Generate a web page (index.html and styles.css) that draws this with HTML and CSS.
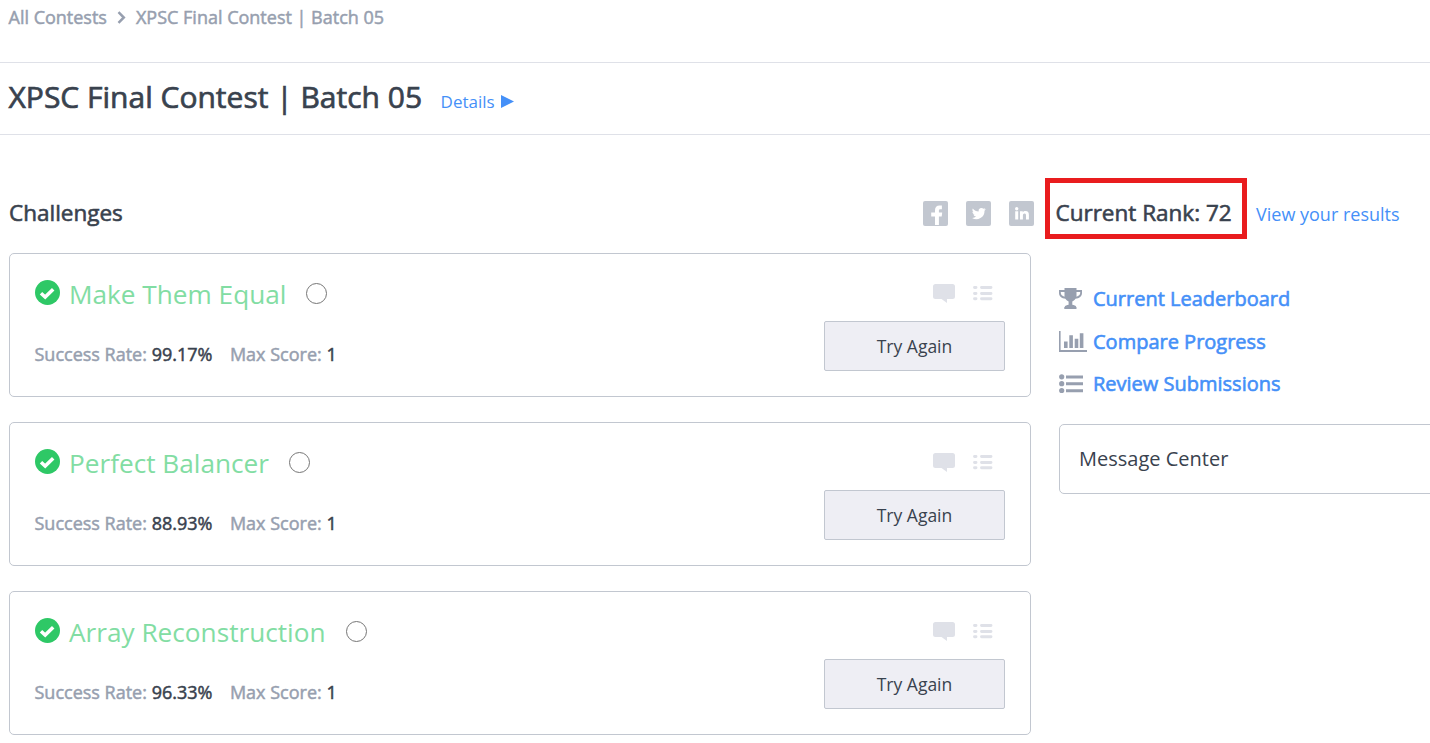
FILE: index.html
```html
<!DOCTYPE html>
<html lang="en">
<head>
<meta charset="utf-8">
<title>XPSC Final Contest | Batch 05</title>
<link rel="stylesheet" href="styles.css">
</head>
<body>
<svg class="sprite" aria-hidden="true">
  <symbol id="check" viewBox="0 0 25 25"><circle cx="12.500" cy="12.500" r="12.500" fill="#2ec866"/><path d="M6 13.200l4.200 3.900 8-7.900" fill="none" stroke="#fff" stroke-width="3.500"/></symbol>
  <symbol id="chat" viewBox="0 0 22 19"><path d="M2.500 0h17A2.500 2.500 0 0 1 22 2.500v10a2.500 2.500 0 0 1-2.500 2.500H14v4l-5.500-4h-6A2.500 2.500 0 0 1 0 12.500v-10A2.500 2.500 0 0 1 2.500 0z"/></symbol>
  <symbol id="rows" viewBox="0 0 20 15"><path d="M1.500 1.500h1.500M1.500 7.500h1.500M1.500 12.700h1.500M8.500 1.500h9.500M8.500 7.500h9.500M8.500 12.700h9.500" stroke="currentColor" stroke-width="2.900" stroke-linecap="round"/></symbol>
</svg>

<nav class="breadcrumb">
  <a>All Contests</a>
  <svg class="chevron" viewBox="0 0 9 13"><path d="M1.500 1.200l5.300 5.300-5.300 5.300" fill="none" stroke="currentColor" stroke-width="2.500"/></svg>
  <a>XPSC Final Contest | Batch 05</a>
</nav>

<header class="page-header">
  <h1 class="title">XPSC Final Contest | Batch 05</h1>
  <a class="details">Details <svg class="play" viewBox="0 0 13 13"><path d="M0 0l13 6.500L0 13z"/></svg></a>
</header>

<main class="content">
  <section class="challenges">
    <div class="section-head">
      <h2 class="heading">Challenges</h2>
      <div class="social">
        <svg viewBox="0 0 25 25"><rect width="25" height="25" rx="2" fill="#c2c7d0"/><path d="M12 24v-8.400H8.200v-4H12V9.300c0-3.100 1.600-4.900 4.600-4.900h2.300v3.800h-1.500c-1.200 0-1.500.5-1.500 1.500v1.900h3.300l-.5 4h-2.800V24z" fill="#fff"/></svg>
        <svg viewBox="0 0 25 25"><rect width="25" height="25" rx="2" fill="#c2c7d0"/><path d="M19.700 8.100c-.5.300-1 .4-1.600.5.600-.4 1-.9 1.200-1.500-.5.300-1.100.6-1.800.7a2.900 2.900 0 0 0-4.900 2.600c-2.300-.1-4.400-1.200-5.800-3-.8 1.400-.3 3 .9 3.800-.5 0-.9-.1-1.300-.4 0 1.400 1 2.500 2.300 2.800-.4.100-.9.100-1.300 0 .4 1.200 1.400 2 2.700 2A5.800 5.800 0 0 1 6 16.900a8.100 8.100 0 0 0 12.500-7.200c.5-.4.900-.9 1.200-1.600z" fill="#fff"/></svg>
        <svg viewBox="0 0 25 25"><rect width="25" height="25" rx="2" fill="#c2c7d0"/><circle cx="7.700" cy="7.700" r="1.700" fill="#fff"/><path d="M6.200 10.300h3v8.200h-3zM11 10.300h2.800v1.200c.5-.9 1.500-1.400 2.700-1.400 2.500 0 3.400 1.500 3.400 4v4.400H17v-4.100c0-1.200-.3-2-1.400-2s-1.700.8-1.700 2v4.100H11z" fill="#fff"/></svg>
      </div>
    </div>

    <article class="card">
      <div class="card-info">
        <div class="name-row"><svg class="check"><use href="#check"/></svg><a class="name">Make Them Equal</a><span class="radio"></span></div>
        <p class="stats"><span>Success Rate: <b>99.17%</b></span><span>Max Score: <b>1</b></span></p>
      </div>
      <div class="card-side">
        <div class="tools"><svg class="chat"><use href="#chat"/></svg><svg class="rows"><use href="#rows"/></svg></div>
        <button class="try">Try Again</button>
      </div>
    </article>
    <article class="card">
      <div class="card-info">
        <div class="name-row"><svg class="check"><use href="#check"/></svg><a class="name">Perfect Balancer</a><span class="radio"></span></div>
        <p class="stats"><span>Success Rate: <b>88.93%</b></span><span>Max Score: <b>1</b></span></p>
      </div>
      <div class="card-side">
        <div class="tools"><svg class="chat"><use href="#chat"/></svg><svg class="rows"><use href="#rows"/></svg></div>
        <button class="try">Try Again</button>
      </div>
    </article>
    <article class="card">
      <div class="card-info">
        <div class="name-row"><svg class="check"><use href="#check"/></svg><a class="name">Array Reconstruction</a><span class="radio"></span></div>
        <p class="stats"><span>Success Rate: <b>96.33%</b></span><span>Max Score: <b>1</b></span></p>
      </div>
      <div class="card-side">
        <div class="tools"><svg class="chat"><use href="#chat"/></svg><svg class="rows"><use href="#rows"/></svg></div>
        <button class="try">Try Again</button>
      </div>
    </article>
  </section>

  <aside class="sidebar">
    <div class="rank-row">
      <div class="rank-box"><h2 class="heading rank">Current Rank: 72</h2></div>
      <a class="results">View your results</a>
    </div>
    <ul class="links">
      <li><svg viewBox="0 0 28 22"><path d="M5.500 0h12v2H23v3c0 3.500-2.800 5.300-6.500 5.800-1 1.400-2.200 2.300-3.200 2.700v3.300c1.500.3 3.900.9 3.900 2.200h.3v2H5.300v-2h.4c0-1.300 2.400-1.900 3.900-2.200v-3.300c-1-.4-2.200-1.300-3.200-2.700C2.800 10.300 0 8.500 0 5V2h5.500zM1.800 4v1c0 1.800 1.500 3.100 3.700 3.700V4zM17.500 4v4.700c2.200-.6 3.700-1.900 3.700-3.700V4z"/></svg><a>Current Leaderboard</a></li>
      <li><svg viewBox="0 0 28 22"><path d="M0 0h1.600v19H28v2H0zM5 10.500h3.600V17H5zM10.300 4.200h3.600V17h-3.600zM15.700 7.700h3.600V17h-3.600zM20.800 2.200h3.600V17h-3.600z"/></svg><a>Compare Progress</a></li>
      <li><svg viewBox="0 0 28 22"><circle cx="2.700" cy="3.800" r="2.600"/><circle cx="2.700" cy="10.700" r="2.600"/><circle cx="2.700" cy="17.500" r="2.600"/><path d="M7 2.400h17v3H7zM7 9.300h17v3H7zM7 16.200h17v3H7z"/></svg><a>Review Submissions</a></li>
    </ul>
    <div class="message">Message Center</div>
  </aside>
</main>
</body>
</html>
```
FILE: styles.css
```css
* { box-sizing: border-box; }
body {
  margin: 0;
  height: 743px;
  overflow: hidden;
  background: #fff;
  color: #39424e;
  font-family: "Open Sans", sans-serif;
}
h1, h2, p, ul { margin: 0; padding: 0; font-weight: 400; }
svg { display: block; flex: none; fill: currentColor; }
.sprite { display: none; }
.breadcrumb {
  display: flex;
  height: 63px;
  padding: 5px 8.5px;
  border-bottom: 1px solid #dfe1e8;
  color: #979faf;
  font-size: 18px;
  line-height: 25px;
  -webkit-text-stroke: .5px;
}
.chevron { width: 9px; height: 13px; margin: 6px 10px 0; }
.page-header {
  display: flex;
  height: 72px;
  padding: 14px 8.5px 0;
  border-bottom: 1px solid #dfe1e8;
}
.title { font-size: 30px; line-height: 40px; -webkit-text-stroke: .7px; white-space: nowrap; }
.details { display: flex; margin: 13px 0 0 18.5px; color: #4590f8; font-size: 17px; line-height: 23px; }
.play { width: 13px; height: 13px; margin: 5px 0 0 6px; }
.content { display: flex; gap: 14px; padding: 43px 0 0 9px; }
.challenges { display: flex; flex-direction: column; gap: 25px; width: 1022px; flex: none; }
.section-head {
  display: flex;
  justify-content: space-between;
  height: 50px;
  padding-top: 20px;
  margin-right: -3px;
}
.heading { font-size: 22.5px; line-height: 30px; -webkit-text-stroke: .6px; white-space: nowrap; }
.social { display: flex; gap: 18px; padding-top: 3px; }
.social svg { width: 25px; height: 25px; }
.card {
  display: flex;
  justify-content: space-between;
  height: 144px;
  padding: 24px 25px 0 24px;
  border: 1px solid #c2c7d0;
  border-radius: 5px;
}
.name-row { display: flex; height: 36px; }
.check { width: 25px; height: 25px; margin: 2px 0 0 1px; }
.name { margin-left: 9px; color: #82dda3; font-size: 26.2px; line-height: 32px; white-space: nowrap; }
.radio { width: 21px; height: 21px; margin: 5px 0 0 20px; border: 1px solid #767676; border-radius: 50%; }
.stats {
  display: flex;
  gap: 17.5px;
  margin: 28px 0 0 .5px;
  color: #979faf;
  font-size: 18px;
  line-height: 25px;
  -webkit-text-stroke: .5px;
}
.stats b { color: #39424e; font-weight: 400; }
.card-side { display: flex; flex-direction: column; align-items: flex-end; }
.tools { display: flex; gap: 18px; height: 43px; padding: 6px 12px 0 0; color: #dfe1e8; }
.chat { width: 22px; height: 19px; }
.rows { width: 20px; height: 15px; margin-top: 2px; }
.try {
  width: 181px;
  height: 50px;
  padding: 0;
  border: 1px solid #c2c7d0;
  border-radius: 2px;
  background: #eeeef4;
  color: #39424e;
  font: 17.5px/24px "Open Sans", sans-serif;
}
.sidebar { flex: 1; min-width: 0; }
.rank-row { display: flex; height: 62px; }
.rank-box { width: 202px; height: 61px; padding: 15px 0 0 5.5px; border: 5px solid #e91c1e; }
.results { margin: 24px 0 0 9px; color: #4590f8; font-size: 18px; line-height: 25px; white-space: nowrap; }
.links { display: flex; flex-direction: column; gap: 12.5px; padding: 44px 0 0 14px; list-style: none; }
.links li { display: flex; height: 30px; color: #979faf; font-size: 20px; line-height: 30px; }
.links svg { width: 28px; height: 22px; margin: 4px 6px 0 0; }
.links a { color: #4590f8; -webkit-text-stroke: .6px; }
.message {
  height: 70px;
  margin: 25px -10px 0 14px;
  padding: 19px;
  border: 1px solid #c2c7d0;
  border-radius: 5px;
  font-size: 20px;
  line-height: 29px;
}
```
